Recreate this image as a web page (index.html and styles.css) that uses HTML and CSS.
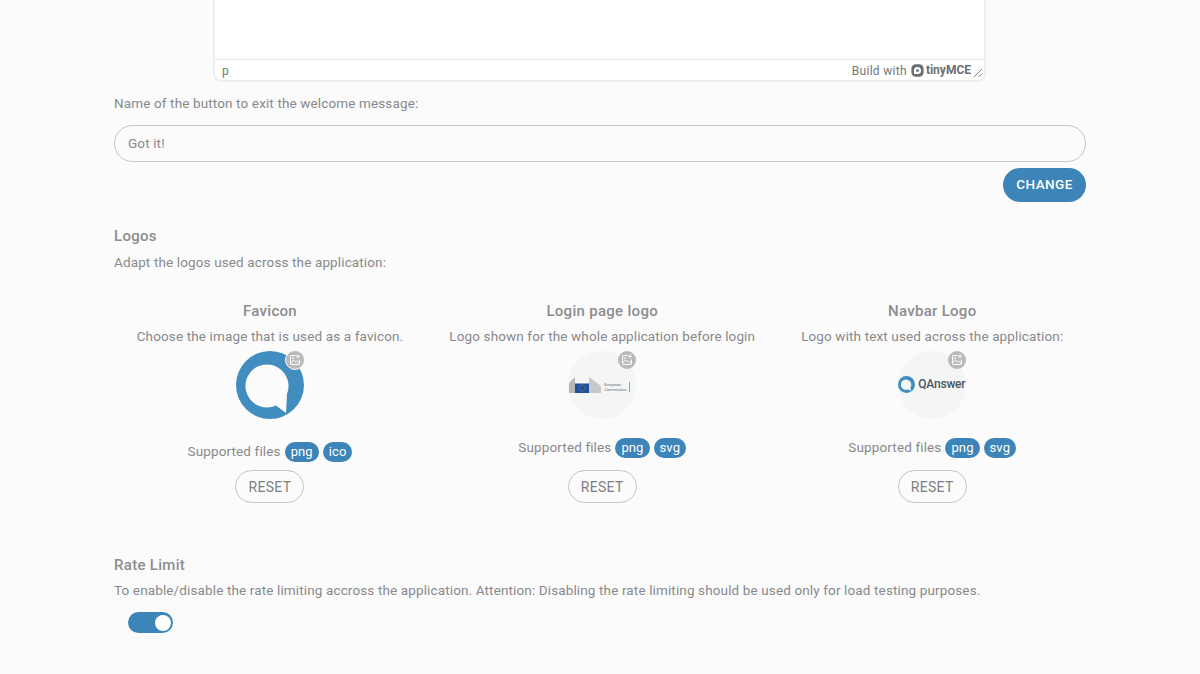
FILE: index.html
```html
<!DOCTYPE html>
<html lang="en">
<head>
    <meta charset="UTF-8">
    <meta name="viewport" content="width=device-width, initial-scale=1.0">
    <title>Settings</title>
    <link rel="stylesheet" href="styles.css">
</head>
<body>
    <div class="editor">
        <div class="editor-area"></div>
        <div class="statusbar">
            <span class="path">p</span>
            <span class="branding">Build with
                <svg class="tiny-icon" viewBox="0 0 14 14" width="13" height="13">
                    <path fill="#6b6e72" fill-rule="evenodd" d="M5 0.4h4A4.6 4.6 0 0 1 13.6 5v4A4.6 4.6 0 0 1 9 13.6H5A4.6 4.6 0 0 1 .4 9V5A4.6 4.6 0 0 1 5 .4zM7 3.2A3.8 3.8 0 0 0 3.2 7v3.8H7A3.8 3.8 0 0 0 10.8 7 3.8 3.8 0 0 0 7 3.2zM6 5.6h2.4v2.8H5.6V6z"/>
                </svg>
                <b class="tiny-name">tinyMCE</b>
            </span>
            <svg class="resize" viewBox="0 0 10 10" width="10" height="10">
                <path d="M1 9 9 1M5.5 9 9 5.5" stroke="#7d7f82" stroke-width="1" fill="none"/>
            </svg>
        </div>
    </div>

    <label class="field-label" for="exit-name">Name of the button to exit the welcome message:</label>
    <input class="text-input" id="exit-name" type="text" value="Got it!">
    <div class="actions">
        <button class="btn-primary">CHANGE</button>
    </div>

    <h2 class="section-title">Logos</h2>
    <p class="section-text">Adapt the logos used across the application:</p>

    <div class="logos">
        <div class="logo-col">
            <h3>Favicon</h3>
            <p>Choose the image that is used as a favicon.</p>
            <div class="logo-circle favicon">
                <svg viewBox="0 0 68 68" width="68" height="68">
                    <circle cx="34" cy="34" r="34" fill="#428dbf"/>
                    <path fill="#fcfcfc" d="M31 13.500a21.500 21.500 0 1 0 9 41L50 62l1-19A21.500 21.500 0 0 0 31 13.500z"/>
                </svg>
                <span class="edit-badge">
                    <svg viewBox="0 0 12 12" width="12" height="12"><path d="M6.5 1.500H2.200a.7.7 0 0 0-.7.7v7.600c0 .4.3.7.7.7h7.600c.4 0 .7-.3.7-.7V5.500M1.700 9l2.800-3 2 2 1.200-1 2.600 2.400M9 .3v4M7 2.300h4" fill="none" stroke="#fff" stroke-width="1"/><circle cx="4.200" cy="4.200" r=".9" fill="#fff"/></svg>
                </span>
            </div>
            <div class="supported favicon-files">Supported files <span class="tag">png</span> <span class="tag">ico</span></div>
            <button class="btn-outline">RESET</button>
        </div>

        <div class="logo-col">
            <h3>Login page logo</h3>
            <p>Logo shown for the whole application before login</p>
            <div class="logo-circle filled">
                <div class="ec-logo">
                    <svg viewBox="0 0 33 16" width="33" height="16">
                        <path fill="#b4b6b8" d="M0 6l6-6v16H0z"/>
                        <path fill="#1f4f9c" d="M6 6.500h14V16H6z"/>
                        <circle cx="13" cy="11.200" r="3" fill="none" stroke="#b59f3a" stroke-width=".8" stroke-dasharray="1 1"/>
                        <path fill="#c6c8ca" d="M20 0l12 9v7H20z"/>
                    </svg>
                    <span class="ec-text">European<br>Commission</span>
                    <span class="ec-bar"></span>
                </div>
                <span class="edit-badge">
                    <svg viewBox="0 0 12 12" width="12" height="12"><path d="M6.5 1.500H2.200a.7.7 0 0 0-.7.7v7.600c0 .4.3.7.7.7h7.600c.4 0 .7-.3.7-.7V5.500M1.700 9l2.800-3 2 2 1.200-1 2.600 2.400M9 .3v4M7 2.300h4" fill="none" stroke="#fff" stroke-width="1"/><circle cx="4.200" cy="4.200" r=".9" fill="#fff"/></svg>
                </span>
            </div>
            <div class="supported">Supported files <span class="tag">png</span> <span class="tag">svg</span></div>
            <button class="btn-outline">RESET</button>
        </div>

        <div class="logo-col">
            <h3>Navbar Logo</h3>
            <p>Logo with text used across the application:</p>
            <div class="logo-circle filled">
                <div class="qa-logo">
                    <svg viewBox="0 0 18 18" width="17" height="17">
                        <circle cx="9" cy="9" r="9" fill="#428dbf"/>
                        <path fill="#f4f5f5" d="M8.500 3.600a5.500 5.500 0 1 0 2 10.600l3.200 1.400-.5-3.500A5.500 5.500 0 0 0 8.500 3.600z"/>
                    </svg>
                    <span class="qa-name">QAnswer</span>
                </div>
                <span class="edit-badge">
                    <svg viewBox="0 0 12 12" width="12" height="12"><path d="M6.5 1.500H2.200a.7.7 0 0 0-.7.7v7.600c0 .4.3.7.7.7h7.600c.4 0 .7-.3.7-.7V5.500M1.700 9l2.800-3 2 2 1.200-1 2.600 2.400M9 .3v4M7 2.300h4" fill="none" stroke="#fff" stroke-width="1"/><circle cx="4.200" cy="4.200" r=".9" fill="#fff"/></svg>
                </span>
            </div>
            <div class="supported">Supported files <span class="tag">png</span> <span class="tag">svg</span></div>
            <button class="btn-outline">RESET</button>
        </div>
    </div>

    <h2 class="section-title rate-title">Rate Limit</h2>
    <p class="section-text rate-text">To enable/disable the rate limiting accross the application. Attention: Disabling the rate limiting should be used only for load testing purposes.</p>
    <label class="switch">
        <input type="checkbox" checked>
        <span class="track"></span>
    </label>
</body>
</html>
```

FILE: styles.css
```css
html {
    height: 100%;
}

body {
    margin: 0;
    height: 674px;
    overflow: hidden;
    padding: 0 114px;
    box-sizing: border-box;
    background-color: #fbfbfb;
    font-family: Roboto, "Liberation Sans", sans-serif;
    font-size: 13.500px;
    letter-spacing: 0.13px;
    color: #88898c;
}

.editor {
    width: 773px;
    height: 82px;
    margin-left: 99px;
    box-sizing: border-box;
    display: flex;
    flex-direction: column;
    background-color: #fff;
    border: 2px solid #eeeeee;
    border-top: 0;
    border-radius: 0 0 8px 8px;
}

.editor-area {
    flex: 1;
    border-bottom: 1px solid #e8e8e8;
}

.statusbar {
    height: 20px;
    box-sizing: border-box;
    padding: 2px 1px 0 7px;
    display: flex;
    align-items: center;
    font-size: 12px;
    letter-spacing: 0.3px;
    color: #75777a;
}

.path {
    flex: 1;
}

.branding {
    display: flex;
    align-items: center;
    gap: 4px;
}

.tiny-name {
    font-size: 12px;
    font-weight: 700;
    letter-spacing: 0;
    color: #6b6e72;
    margin-left: -2px;
    margin-top: -2px;
}

.tiny-icon {
    margin-top: -1px;
}

.resize {
    margin-left: 2px;
    margin-top: 3px;
}

.field-label {
    display: block;
    margin-top: 13px;
    line-height: 17px;
}

.text-input {
    display: block;
    width: 100%;
    height: 37px;
    margin-top: 13px;
    padding: 0 13px 2px;
    box-sizing: border-box;
    background: transparent;
    border: 1px solid #c4c4c4;
    border-radius: 19px;
    font: inherit;
    letter-spacing: inherit;
    color: #88898c;
}

.actions {
    display: flex;
    justify-content: flex-end;
    margin-top: 6px;
}

.btn-primary {
    width: 83px;
    height: 34px;
    padding: 0 0 2px;
    border: 0;
    border-radius: 17px;
    background-color: #3d84b8;
    color: #fff;
    font-family: inherit;
    font-size: 13.500px;
    font-weight: 500;
    letter-spacing: 0.45px;
}

.section-title {
    margin: 25px 0 0;
    font-size: 15px;
    line-height: 18px;
    font-weight: 500;
    letter-spacing: 0.3px;
    color: #8b8d90;
}

.rate-title {
    margin-top: 53px;
}

.section-text {
    margin: 9px 0 0;
    line-height: 17px;
}

.rate-text {
    margin-top: 8px;
}

.logos {
    display: flex;
    justify-content: center;
    gap: 46px;
    margin-top: 31px;
}

.logo-col {
    display: flex;
    flex-direction: column;
    align-items: center;
}

.logo-col h3 {
    margin: 0;
    font-size: 15px;
    line-height: 18px;
    font-weight: 500;
    letter-spacing: 0.3px;
    color: #8b8d90;
}

.logo-col p {
    margin: 8px 0 0;
    line-height: 17px;
    white-space: nowrap;
}

.logo-circle {
    position: relative;
    width: 68px;
    height: 68px;
    margin-top: 6px;
    border-radius: 50%;
    display: flex;
    align-items: center;
    justify-content: center;
}

.logo-circle.filled {
    background-color: #f4f5f5;
}

.edit-badge {
    position: absolute;
    top: 0;
    right: 0;
    width: 18px;
    height: 18px;
    border-radius: 50%;
    background-color: #b9b9b9;
    display: flex;
    align-items: center;
    justify-content: center;
}

.favicon .edit-badge {
    box-sizing: content-box;
    top: -1px;
    right: -1px;
    border: 1.500px solid #fbfbfb;
}

.ec-logo {
    display: flex;
    align-items: center;
    gap: 1px;
    width: 60px;
    margin-right: 6px;
    margin-top: -1px;
}

.ec-logo svg {
    flex: none;
}

.ec-text {
    font-size: 4px;
    line-height: 5px;
    letter-spacing: 0;
    color: #6a6d70;
    white-space: nowrap;
    margin-top: 5px;
    margin-left: 1px;
}

.ec-bar {
    width: 1px;
    height: 10px;
    margin-left: 1px;
    margin-top: 5px;
    background-color: #6fa6cc;
}

.qa-logo {
    display: flex;
    align-items: center;
    gap: 3px;
    width: 68px;
    margin-top: -2px;
}

.qa-name {
    font-size: 12px;
    font-weight: 500;
    letter-spacing: -0.2px;
    color: #4a5560;
}

.supported {
    margin-top: 17px;
    height: 21px;
    display: flex;
    align-items: center;
    gap: 4px;
    white-space: nowrap;
}

.favicon-files {
    margin-top: 21px;
}

.favicon-files + .btn-outline {
    margin-top: 9px;
}

.tag {
    height: 20px;
    padding: 0 6px;
    margin-top: 2px;
    border-radius: 10px;
    background-color: #3d84b8;
    color: #fff;
    font-size: 13px;
    letter-spacing: 0.1px;
    line-height: 20px;
}

.btn-outline {
    width: 69px;
    height: 33px;
    margin-top: 13px;
    padding: 0;
    background: transparent;
    border: 1px solid #c4c4c4;
    border-radius: 17px;
    font-family: inherit;
    font-size: 14px;
    letter-spacing: 0.3px;
    color: #7d7f82;
}

.switch {
    display: block;
    position: relative;
    width: 45px;
    height: 21px;
    margin: 13px 0 0 14px;
}

.switch input {
    opacity: 0;
    width: 0;
    height: 0;
}

.track {
    position: absolute;
    top: 0;
    left: 0;
    right: 0;
    bottom: 0;
    border-radius: 11px;
    background-color: #3d84b8;
}

.track:before {
    position: absolute;
    content: "";
    width: 16px;
    height: 16px;
    top: 2.500px;
    right: 2px;
    border-radius: 50%;
    background-color: #fff;
}
```
